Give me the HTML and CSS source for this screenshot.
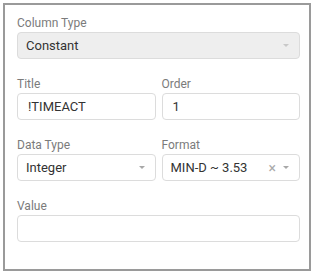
FILE: index.html
```html
<!DOCTYPE html>
<html>
<head>
  <meta charset="utf-8">
  <title>Column</title>
  <link rel="stylesheet" href="styles.css">
</head>
<body>
  <div class="panel">
    <div class="field">
      <label>Column Type</label>
      <div class="control select disabled">
        <span class="value">Constant</span>
        <span class="arrow"></span>
      </div>
    </div>

    <div class="row">
      <div class="field">
        <label>Title</label>
        <div class="control input">!TIMEACT</div>
      </div>
      <div class="field">
        <label>Order</label>
        <div class="control input">1</div>
      </div>
    </div>

    <div class="row">
      <div class="field">
        <label>Data Type</label>
        <div class="control select">
          <span class="value">Integer</span>
          <span class="arrow"></span>
        </div>
      </div>
      <div class="field">
        <label>Format</label>
        <div class="control select">
          <span class="value">MIN-D ~ 3.53</span>
          <span class="clear">&times;</span>
          <span class="arrow"></span>
        </div>
      </div>
    </div>

    <div class="field">
      <label>Value</label>
      <div class="control input"></div>
    </div>
  </div>
</body>
</html>
```

FILE: styles.css
```css
body {
  margin: 0;
  background: #fff;
  font-family: Roboto, "Liberation Sans", Arial, sans-serif;
}
.panel {
  box-sizing: border-box;
  margin: 3px;
  width: 308px;
  height: 268px;
  border: 2px solid #9a9a9a;
  padding: 10px 9px 0 12px;
}
.row {
  display: flex;
  gap: 6px;
}
.row .field {
  flex: 1;
}
.field {
  margin-bottom: 17px;
}
label {
  display: block;
  font-size: 12px;
  line-height: 16px;
  margin-bottom: 1px;
  color: #7b7b7b;
}
.control {
  box-sizing: border-box;
  height: 27px;
  border: 1px solid #dcdcdc;
  border-radius: 4px;
  background: #fff;
  font-size: 13px;
  color: #333;
  display: flex;
  align-items: center;
  padding: 0 10px;
}
.select {
  padding: 0 8px;
}
.disabled {
  background: #eeeeee;
}
.value {
  flex: 1;
}
.clear {
  color: #aaa;
  font-size: 14px;
  margin-right: 7px;
}
.arrow {
  width: 0;
  height: 0;
  border-left: 3px solid transparent;
  border-right: 3px solid transparent;
  border-top: 3px solid #a8a8a8;
  margin-right: 2px;
}
.disabled .arrow {
  border-top-color: #c8c8c8;
}
```
